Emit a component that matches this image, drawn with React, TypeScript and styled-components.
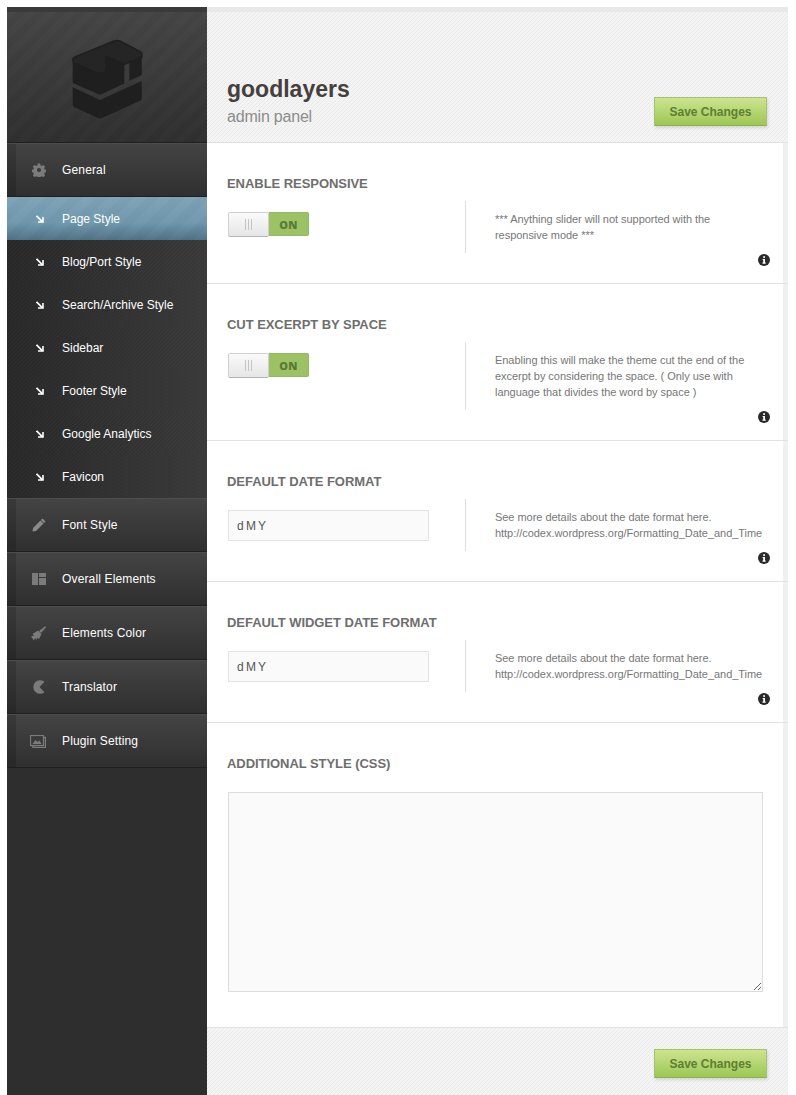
import { FC, ReactElement } from "react";
import styled, { createGlobalStyle } from "styled-components";

/*
    ====================================================== [Styles]======================================================
*/

const GlobalStyle = createGlobalStyle`
  html, body {
    margin: 0;
    padding: 0;
    background: #fff;
  }
  body {
    font-family: "Liberation Sans", Arial, sans-serif;
  }
`;

const Page = styled.div`
  width: 796px;
  height: 1095px;
  box-sizing: border-box;
  padding: 7px 8px 0 7px;
  overflow: hidden;
`;

const Panel = styled.div`
  display: flex;
  height: 1088px;
`;

const Sidebar = styled.aside`
  width: 200px;
  flex: none;
  display: flex;
  flex-direction: column;
  background: #2e2e2e;
  border-top: 5px solid #3a3a3a;
`;

const LogoArea = styled.div`
  height: 131px;
  box-sizing: border-box;
  display: flex;
  align-items: flex-start;
  justify-content: center;
  padding: 27px 0 0 0;
  background:
    repeating-linear-gradient(135deg, rgba(255, 255, 255, 0.01) 0 7px, rgba(0, 0, 0, 0.01) 7px 14px),
    linear-gradient(#454545, #2f2f2f);
  border-bottom: 1px solid #1f1f1f;
`;

const MainItem = styled.div`
  height: 54px;
  box-sizing: border-box;
  display: flex;
  align-items: center;
  color: #fff;
  font-size: 12px;
  letter-spacing: 0.15px;
  background:
    linear-gradient(90deg, rgba(0, 0, 0, 0.16) 0 9px, transparent 9px),
    linear-gradient(#444, #2f2f2f);
  border-top: 1px solid #4d4d4d;
  border-bottom: 1px solid #1f1f1f;
`;

const SubItem = styled.div<{ $active?: boolean }>`
  height: 43px;
  box-sizing: border-box;
  display: flex;
  align-items: center;
  color: #fff;
  font-size: 12px;
  background: ${({ $active }) =>
    $active
      ? `repeating-linear-gradient(135deg, rgba(255,255,255,0.018) 0 9px, rgba(0,0,0,0.01) 9px 18px),
         linear-gradient(#7ea2b7, #6f97ad 60%, #4f7186)`
      : `repeating-linear-gradient(135deg, rgba(255,255,255,0.025) 0 1px, transparent 1px 2.83px),
         linear-gradient(90deg, #282828, #393939)`};
`;

const IconSlot = styled.span`
  width: 55px;
  flex: none;
  display: flex;
  justify-content: flex-end;
  padding-right: 16px;
  box-sizing: border-box;
`;

const ArrowSlot = styled(IconSlot)`
  padding-right: 18px;
`;

const Content = styled.main`
  flex: 1;
  display: flex;
  flex-direction: column;
  border-top: 5px solid #e8e8e8;
`;

const Striped = styled.div`
  background: repeating-linear-gradient(135deg, #e9e9e9 0 1px, #f4f4f4 1px 2.83px);
`;

const Header = styled(Striped)`
  height: 131px;
  box-sizing: border-box;
  display: flex;
  justify-content: space-between;
  align-items: flex-end;
  padding: 0 21px 16px 20px;
  border-bottom: 1px solid #e2e2e2;
`;

const Brand = styled.h1`
  margin: 0;
  color: #45403e;
  font-size: 23px;
  line-height: 26px;
  font-weight: bold;
`;

const BrandSub = styled.div`
  color: #8c8c8c;
  font-size: 16px;
  line-height: 20px;
  letter-spacing: -0.2px;
  margin-top: 5px;
  margin-bottom: -1px;
`;

const SaveButton = styled.button`
  width: 113px;
  height: 29px;
  box-sizing: border-box;
  padding: 0;
  color: #5f7d33;
  font-family: inherit;
  font-size: 12px;
  font-weight: bold;
  background: linear-gradient(#cde48f, #9cc755);
  border: 1px solid #a5c270;
  border-bottom-color: #8fb24f;
  box-shadow: 1px 2px 3px rgba(0, 0, 0, 0.12);
`;

const Rows = styled.div`
  flex: 1;
  background: linear-gradient(90deg, #fff 576px, #f0f0f0 576px);
`;

const Row = styled.section`
  position: relative;
  box-sizing: border-box;
  padding: 34px 20px 30px;
  border-bottom: 1px solid #e2e2e2;
`;

const TitleRow = styled.h2`
  margin: 0 0 10px;
  color: #6e6e6e;
  font-size: 13px;
  line-height: 14px;
  font-weight: bold;
  letter-spacing: -0.05px;
`;

const RowBody = styled.div`
  display: flex;
`;

const Control = styled.div`
  width: 237px;
  flex: none;
  padding-top: 10px;
  margin-left: 1px;
`;

const Description = styled.p`
  margin: 0;
  width: 298px;
  box-sizing: border-box;
  padding: 10px 0 10px 29px;
  border-left: 1px solid #dedede;
  color: #777;
  font-size: 11px;
  line-height: 16px;
  letter-spacing: -0.04px;
`;

const Toggle = styled.div`
  display: flex;
  width: 81px;
  height: 25px;
  margin-top: 1px;
`;

const Knob = styled.div`
  width: 41px;
  box-sizing: border-box;
  display: flex;
  align-items: center;
  justify-content: center;
  gap: 2px;
  background: linear-gradient(#fafafa, #e6e6e6);
  border: 1px solid #cfcfcf;
  border-bottom-color: #b5b5b5;
  border-radius: 2px;
  i {
    width: 1px;
    height: 11px;
    background: #c4c4c4;
  }
`;

const ToggleOn = styled.div`
  flex: 1;
  height: 24px;
  display: flex;
  align-items: center;
  justify-content: center;
  background: #9cc265;
  border: 1px solid #94b85f;
  box-sizing: border-box;
  border-left: 0;
  border-radius: 0 2px 2px 0;
  color: #5a7a38;
  font-family: "Open Sans", sans-serif;
  font-size: 11px;
  font-weight: 800;
  letter-spacing: 0.3px;
`;

const TextField = styled.div`
  width: 201px;
  height: 31px;
  box-sizing: border-box;
  padding-left: 8px;
  display: flex;
  align-items: center;
  background: #fafafa;
  border: 1px solid #e4e4e4;
  color: #555;
  font-size: 12px;
  word-spacing: -1px;
`;

const TextFieldWrap = styled.div`
  margin-top: 1px;
`;

const InfoBadge = styled.span`
  position: absolute;
  right: 18px;
  bottom: 17px;
  display: flex;
`;

const TextAreaRow = styled.section`
  box-sizing: border-box;
  height: 305px;
  padding: 34px 20px 0 21px;
  border-bottom: 1px solid #e2e2e2;
`;

const AreaTitle = styled(TitleRow)`
  margin: 0 0 21px -1px;
`;

const CssArea = styled.textarea`
  display: block;
  width: 535px;
  height: 200px;
  box-sizing: border-box;
  margin: 0;
  background: #fafafa;
  border: 1px solid #dcdcdc;
  outline: none;
`;

const Footer = styled(Striped)`
  height: 67px;
  box-sizing: border-box;
  display: flex;
  justify-content: flex-end;
  padding: 21px 21px 0 0;
`;

/*
    ====================================================== [Icons]======================================================
*/

const ICON_COLOR = "#7b7b7b";

const GoodlayersLogo: FC = () => (
  <svg width="72" height="81" viewBox="0 0 72 81" fill="#1f1f1f">
    <path
      d="M1.7 21 Q1.7 19 4 18 L43 2 Q46 1 49 2 L69 12.5 Q71 13.5 71 16 V18 L53.3 25.3 L35 17 V30 Q35 32 33 33 Q29 35 25 34 L3 24 Z"
      fill="#252525"
      stroke="#1f1f1f"
      strokeWidth="1.6"
      strokeLinejoin="round"
    />
    <path d="M1.7 21 V42.7 Q1.7 44 3 44.5 L27 55 Q29 55.8 31 55 L53.3 44.5 V25.3 L35 17 V30 Q35 32 33 33 Q29 35 25 34 L3 24 Z" />
    <path d="M58.3 23.7 L70.7 18.3 V36 L58.3 41.7 Z" />
    <path d="M1.7 48.3 L29 61 L70.7 42 V60 Q70.7 61 69.5 61.5 L31 79 Q29 79.8 27 79 L3 68 Q1.7 67.4 1.7 66 Z" />
  </svg>
);

const Arrow: FC = () => (
  <svg width="8" height="8" viewBox="0 0 8 8" fill="none" stroke="#fff" strokeWidth="1.8">
    <path d="M.5 .8 L6.5 6.8" />
    <path d="M7 2 V7 H2" strokeWidth="1.6" />
  </svg>
);

const GearIcon: FC = () => (
  <svg width="14" height="14" viewBox="0 0 24 24" fill={ICON_COLOR}>
    <path
      fillRule="evenodd"
      d="M10 1 h4 l.6 3 2.4 1 2.6-1.7 2.9 2.9-1.7 2.6 1 2.4 3 .6 v4 l-3 .6-1 2.4 1.7 2.6-2.9 2.9-2.6-1.7-2.4 1-.6 3 h-4 l-.6-3-2.4-1-2.6 1.7-2.9-2.9 1.7-2.6-1-2.4-3-.6 v-4 l3-.6 1-2.4-1.7-2.6 2.9-2.9 2.6 1.7 2.4-1 z M12 8.5 a3.5 3.5 0 1 0 0 7 a3.5 3.5 0 0 0 0-7 z"
    />
  </svg>
);

const PencilIcon: FC = () => (
  <svg width="14" height="14" viewBox="0 0 14 14" fill="#8a8a8a">
    <path d="M10.5 .5 L13.5 3.5 L12 5 L9 2 Z" />
    <path d="M8.5 2.5 L11.5 5.5 L4 13 L.5 13.5 L1 10 Z" />
  </svg>
);

const LayoutIcon: FC = () => (
  <svg width="14" height="12" viewBox="0 0 14 12" fill={ICON_COLOR}>
    <rect x="0" y="0" width="6" height="12" />
    <rect x="7" y="0" width="7" height="4" />
    <rect x="7" y="5" width="7" height="7" />
  </svg>
);

const BrushIcon: FC = () => (
  <svg width="15" height="15" viewBox="0 0 15 15" fill={ICON_COLOR}>
    <path d="M14.5 0 L15 1.5 L10 7 L8 5 Z" />
    <path d="M7 4.5 L10.5 8 L8 13 Q7 12.5 6.5 11.5 L5.5 14 L4 12 L3 14.5 L0 10.5 L3 9.5 L1.5 8 Z" />
  </svg>
);

const PacmanIcon: FC = () => (
  <svg width="14" height="14" viewBox="0 0 14 14" fill={ICON_COLOR}>
    <path d="M12.5 1.8 A6.8 6.8 0 1 0 12.5 12.2 L7.5 7 Z" />
  </svg>
);

const ImagesIcon: FC = () => (
  <svg width="16" height="13" viewBox="0 0 16 13" fill="none" stroke={ICON_COLOR}>
    <path d="M3 10.5 V12.5 H15.5 V2.5 H13.5" strokeWidth="1.4" />
    <rect x=".5" y=".5" width="13" height="10" fill="#3a3a3a" strokeWidth="1.2" />
    <path d="M2.5 9 L5.5 5 L7.5 7 L9.5 5.5 L11.5 9 Z" fill={ICON_COLOR} stroke="none" />
  </svg>
);

const InfoIcon: FC = () => (
  <svg width="12" height="12" viewBox="0 0 12 12">
    <circle cx="6" cy="6" r="6" fill="#2a2a2a" />
    <rect x="5.2" y="2.2" width="1.8" height="1.7" fill="#fff" />
    <path d="M4.6 5 H7 V8.6 H7.7 V9.8 H4.5 V8.6 H5.2 V6.1 H4.6 Z" fill="#fff" />
  </svg>
);

/*
    ====================================================== [Configs]======================================================
*/

const SUB_ITEMS: Array<string> = [
  "Page Style",
  "Blog/Port Style",
  "Search/Archive Style",
  "Sidebar",
  "Footer Style",
  "Google Analytics",
  "Favicon",
];

const BOTTOM_ITEMS: Array<{ label: string; Icon: FC }> = [
  { label: "Font Style", Icon: PencilIcon },
  { label: "Overall Elements", Icon: LayoutIcon },
  { label: "Elements Color", Icon: BrushIcon },
  { label: "Translator", Icon: PacmanIcon },
  { label: "Plugin Setting", Icon: ImagesIcon },
];

const DATE_NOTE = (
  <>
    See more details about the date format here.
    <br />
    http://codex.wordpress.org/Formatting_Date_and_Time
  </>
);

/*
    ====================================================== [App Component]======================================================
*/

const ToggleSwitch: FC = () => (
  <Toggle>
    <Knob>
      <i />
      <i />
      <i />
    </Knob>
    <ToggleOn>ON</ToggleOn>
  </Toggle>
);

const DateField: FC = () => (
  <TextFieldWrap>
    <TextField>d M Y</TextField>
  </TextFieldWrap>
);

const SettingRow: FC<{ title: string; control: ReactElement; note: ReactElement | string }> = ({
  title,
  control,
  note,
}) => (
  <Row>
    <TitleRow>{title}</TitleRow>
    <RowBody>
      <Control>{control}</Control>
      <Description>{note}</Description>
    </RowBody>
    <InfoBadge>
      <InfoIcon />
    </InfoBadge>
  </Row>
);

export default function App(): ReactElement {
  return (
    <Page>
      <GlobalStyle />
      <Panel>
        <Sidebar>
          <LogoArea>
            <GoodlayersLogo />
          </LogoArea>
          <MainItem>
            <IconSlot>
              <GearIcon />
            </IconSlot>
            General
          </MainItem>
          {SUB_ITEMS.map((label, index) => (
            <SubItem key={label} $active={index === 0}>
              <ArrowSlot>
                <Arrow />
              </ArrowSlot>
              {label}
            </SubItem>
          ))}
          {BOTTOM_ITEMS.map(({ label, Icon }) => (
            <MainItem key={label}>
              <IconSlot>
                <Icon />
              </IconSlot>
              {label}
            </MainItem>
          ))}
        </Sidebar>
        <Content>
          <Header>
            <div>
              <Brand>goodlayers</Brand>
              <BrandSub>admin panel</BrandSub>
            </div>
            <SaveButton>Save Changes</SaveButton>
          </Header>
          <Rows>
            <SettingRow
              title="ENABLE RESPONSIVE"
              control={<ToggleSwitch />}
              note="*** Anything slider will not supported with the responsive mode ***"
            />
            <SettingRow
              title="CUT EXCERPT BY SPACE"
              control={<ToggleSwitch />}
              note="Enabling this will make the theme cut the end of the excerpt by considering the space. ( Only use with language that divides the word by space )"
            />
            <SettingRow title="DEFAULT DATE FORMAT" control={<DateField />} note={DATE_NOTE} />
            <SettingRow title="DEFAULT WIDGET DATE FORMAT" control={<DateField />} note={DATE_NOTE} />
            <TextAreaRow>
              <AreaTitle>ADDITIONAL STYLE (CSS)</AreaTitle>
              <CssArea />
            </TextAreaRow>
          </Rows>
          <Footer>
            <SaveButton>Save Changes</SaveButton>
          </Footer>
        </Content>
      </Panel>
    </Page>
  );
}
